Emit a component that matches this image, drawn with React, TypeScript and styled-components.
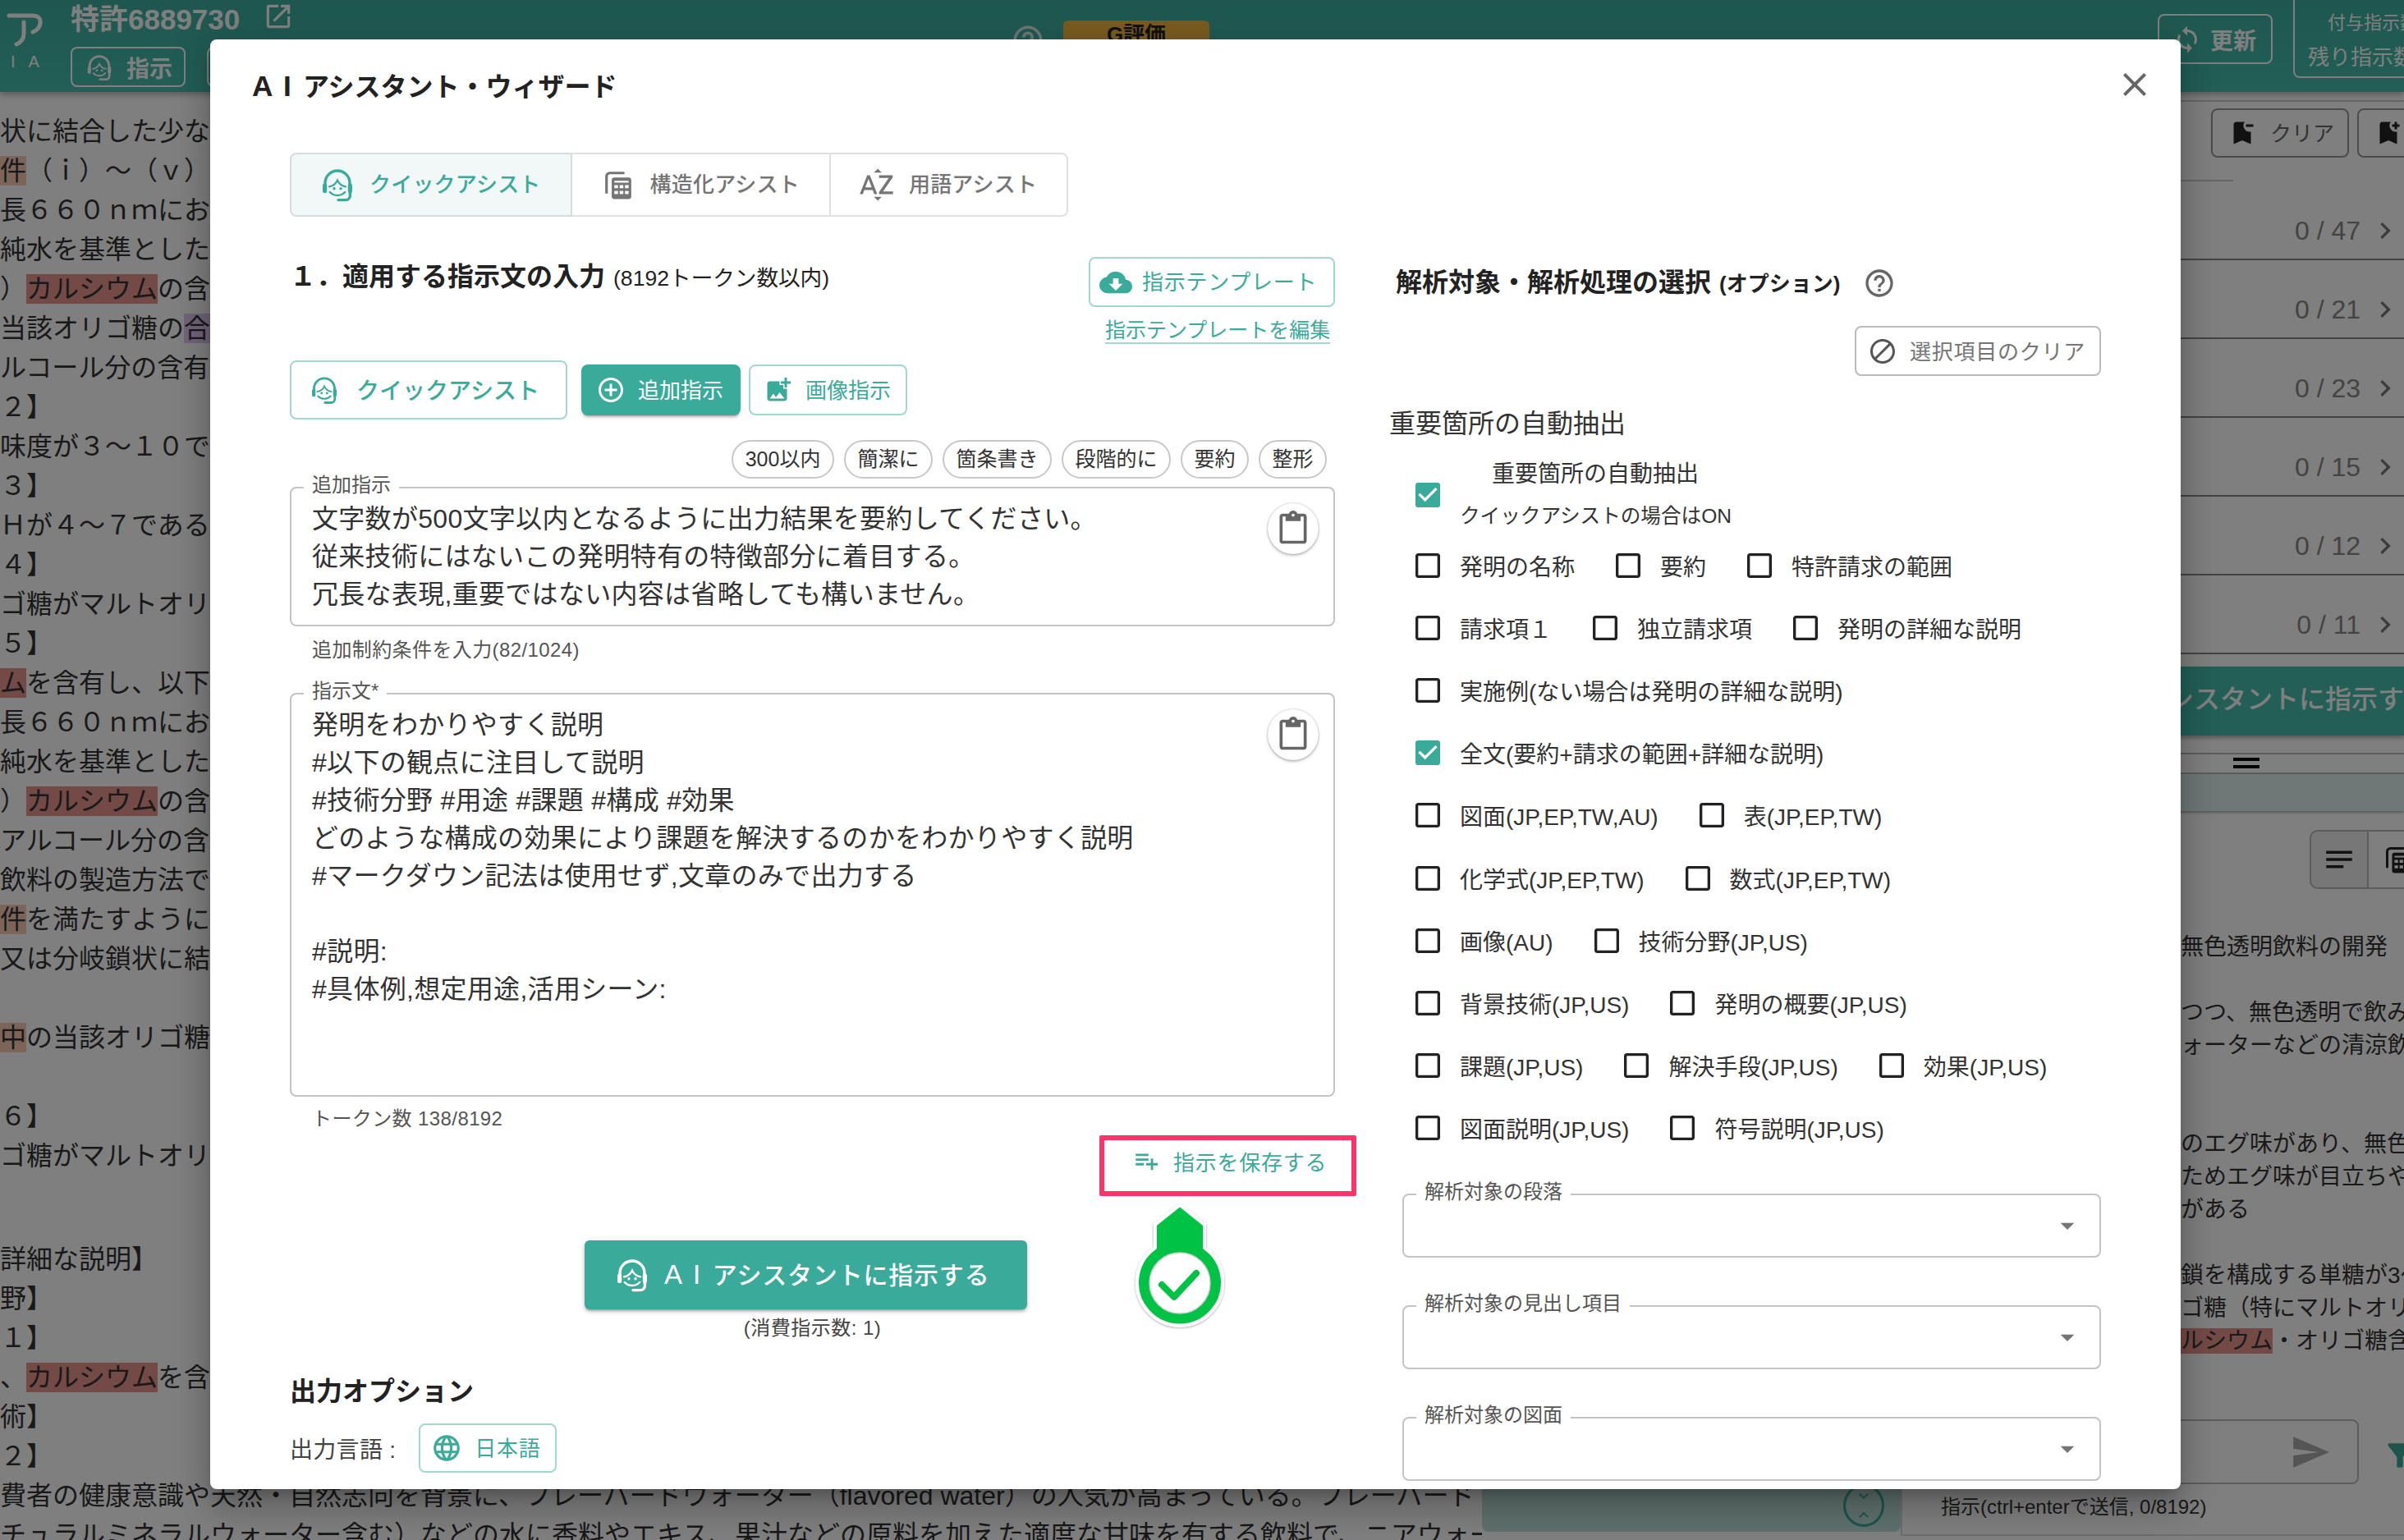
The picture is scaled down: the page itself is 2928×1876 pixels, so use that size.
import React from "react";
import styled, { createGlobalStyle } from "styled-components";
import {
  MdAddCircleOutline,
  MdAddPhotoAlternate,
  MdArrowDropDown,
  MdBlock,
  MdBookmarkAdd,
  MdBookmarkRemove,
  MdCheckBox,
  MdCheckBoxOutlineBlank,
  MdChevronRight,
  MdClose,
  MdCloudDownload,
  MdExpandLess,
  MdExpandMore,
  MdFilterAlt,
  MdHelpOutline,
  MdLanguage,
  MdNotes,
  MdOpenInNew,
  MdOutlineContentPaste,
  MdPlaylistAdd,
  MdSend,
  MdSortByAlpha,
  MdSync,
} from "react-icons/md";

const TEAL = "#3aab9a";
const TEAL_LINE = "#a3d8cf";
const BTN_SPACING = "0.02857em";

const GlobalStyle = createGlobalStyle`
  * { box-sizing: border-box; }
  body {
    margin: 0;
    font-family: "Liberation Sans", "Noto Sans CJK JP", sans-serif;
    color: #333;
    background: #fff;
  }
`;

const AssistIcon = ({ size = 40 }: { size?: number }) => (
  <svg width={size} height={size} viewBox="0 0 24 24" fill="none" stroke="currentColor" strokeWidth="1.5" strokeLinecap="round" style={{ flex: "none" }}>
    <path d="M4.500 12V11a7.500 7.500 0 0 1 15 0v1" strokeWidth="1.700" />
    <path d="M7 13.200c2.200-.3 4-1.800 5-3.800 1 2 2.800 3.500 5 3.800" strokeWidth="1.200" />
    <path d="M7.400 16.500c1.200 1.300 2.800 2 4.600 2 1.800 0 3.400-.7 4.600-2" strokeWidth="1.200" />
    <path d="M4.300 12.500v3.200M19.700 12.500v3.200" strokeWidth="2.600" />
    <path d="M19.700 16v2.600a2.700 2.700 0 0 1-2.700 2.700h-4.500" strokeWidth="1.700" />
    <circle cx="10" cy="14.400" r=".85" fill="currentColor" stroke="none" />
    <circle cx="14" cy="14.400" r=".85" fill="currentColor" stroke="none" />
  </svg>
);

const StackTableIcon = ({ size = 40 }: { size?: number }) => (
  <svg width={size} height={size} viewBox="0 0 24 24" fill="currentColor" style={{ flex: "none" }}>
    <path d="M3 18V5.5A2.5 2.5 0 0 1 5.5 3H16" fill="none" stroke="currentColor" strokeWidth="2" strokeLinecap="round" />
    <path d="M9 6.5h11a2 2 0 0 1 2 2V21a2 2 0 0 1-2 2H9a2 2 0 0 1-2-2V8.500a2 2 0 0 1 2-2z" />
    <g fill="#fff">
      <rect x="9" y="9" width="11" height="1.4" />
      <rect x="9" y="12.300" width="2.800" height="2.400" />
      <rect x="13.100" y="12.300" width="2.800" height="2.400" />
      <rect x="17.200" y="12.300" width="2.800" height="2.400" />
      <rect x="9" y="16.800" width="2.800" height="2.400" />
      <rect x="13.100" y="16.800" width="2.800" height="2.400" />
      <rect x="17.200" y="16.800" width="2.800" height="2.400" />
    </g>
  </svg>
);

const LogoMark = () => (
  <svg width="48" height="44" viewBox="0 0 48 44" fill="none" stroke="currentColor" strokeWidth="5" strokeLinecap="round" strokeLinejoin="round">
    <path d="M3 5 H31 Q42 5 41 14 Q40 22 32 25" />
    <path d="M21 13 V27 Q21 36 12 40" />
  </svg>
);

const GreenMarker = () => (
  <svg width="124" height="156" viewBox="0 0 124 156">
    <defs>
      <filter id="markerShadow" x="-10%" y="-10%" width="120%" height="120%">
        <feDropShadow dx="0" dy="1" stdDeviation="1.5" floodColor="#000" floodOpacity="0.35" />
      </filter>
    </defs>
    <g filter="url(#markerShadow)">
      <path
        d="M62 3 L92 27 V55 A52 52 0 1 1 32 55 V27 Z"
        fill="#00c244"
        stroke="#fff"
        strokeWidth="4"
        strokeLinejoin="round"
      />
    </g>
    <circle cx="62" cy="98" r="37" fill="#fff" stroke="#cfcfcf" strokeWidth="1.5" />
    <path d="M40 100 L55 115 L82 86" fill="none" stroke="#00c244" strokeWidth="8" strokeLinecap="round" strokeLinejoin="round" />
  </svg>
);

const Page = styled.div`
  position: relative;
  width: 2928px;
  height: 1876px;
  overflow: hidden;
`;

const AiMark = styled.span`
  font-size: 1.1em;
  word-spacing: 0.12em;
  white-space: pre;
`;

/* ---------- page behind the dialog ---------- */

const Header = styled.header`
  display: flex;
  height: 112px;
  background: linear-gradient(#3eae9f, #45bfae);
  color: #fff;
  box-shadow: 0 3px 8px rgba(0, 0, 0, 0.3);
`;

const Logo = styled.div`
  display: flex;
  flex-direction: column;
  width: 86px;
  padding: 14px 0 0 8px;
  flex: none;
`;

const LogoSub = styled.span`
  margin: 6px 0 0 5px;
  font-size: 20px;
  line-height: 22px;
  letter-spacing: 16px;
  white-space: nowrap;
`;

const TitleStack = styled.div`
  width: 1145px;
  flex: none;
`;

const DocTitle = styled.div`
  display: flex;
  align-items: center;
  gap: 28px;
  height: 40px;
  font-size: 35px;
  font-weight: 700;
`;

const HeaderTools = styled.div`
  display: flex;
  gap: 26px;
  margin-top: 17px;
`;

const HeaderBtn = styled.div<{ $w: number }>`
  display: flex;
  align-items: center;
  justify-content: center;
  gap: 14px;
  width: ${(p) => p.$w}px;
  height: 49px;
  border: 2px solid #fff;
  border-radius: 8px;
  font-size: 28px;
  font-weight: 700;
`;

const HeaderHelp = styled.div`
  margin-top: 28px;
  width: 64px;
  flex: none;
  opacity: 0.8;
`;

const GradeBadge = styled.div`
  width: 178px;
  height: 60px;
  margin-top: 25px;
  flex: none;
  background: #f4b840;
  border-radius: 6px;
  color: #222;
  font-size: 26px;
  font-weight: 700;
  text-align: center;
  line-height: 34px;
`;

const HeaderRight = styled.div`
  display: flex;
  gap: 25px;
  margin-left: auto;
  width: 300px;
  flex: none;
`;

const RefreshBtn = styled.div`
  display: flex;
  align-items: center;
  gap: 10px;
  width: 140px;
  height: 61px;
  margin-top: 17px;
  padding-left: 16px;
  flex: none;
  border: 2px solid #fff;
  border-radius: 8px;
  font-size: 28px;
  font-weight: 700;
`;

const QuotaBox = styled.div`
  width: 200px;
  height: 95px;
  flex: none;
  padding-left: 16px;
  border: 2px solid #fff;
  border-top: 0;
  border-radius: 0 0 8px 8px;
  white-space: nowrap;
`;

const QuotaTop = styled.div`
  font-size: 22px;
  line-height: 32px;
  margin-top: 12px;
  padding-left: 24px;
`;

const QuotaBottom = styled.div`
  font-size: 26px;
  line-height: 36px;
  margin-top: 8px;
`;

const Body = styled.div`
  display: flex;
  height: 1764px;
`;

const DocColumn = styled.div`
  width: 1805px;
  flex: none;
  padding-top: 24px;
  overflow: hidden;
`;

const DocLine = styled.div<{ $mt?: number }>`
  height: 48px;
  line-height: 48px;
  margin-top: ${(p) => p.$mt ?? 0}px;
  font-size: 32px;
  white-space: nowrap;
`;

const TONES: Record<string, string> = {
  red: "#e8958e",
  brown: "#f8c8b2",
  purple: "#e3c6f7",
};

const Mark = styled.span<{ $tone: string }>`
  background: ${(p) => TONES[p.$tone]};
`;

const MiddleColumn = styled.div`
  display: flex;
  flex-direction: column;
  justify-content: flex-end;
  width: 510px;
  flex: none;
  padding-bottom: 10px;
`;

const ScrollStrip = styled.div`
  display: flex;
  justify-content: flex-end;
  height: 52px;
  padding-right: 20px;
  background: #bfe0da;
  border-radius: 0 0 8px 8px;
`;

const ScrollDial = styled.div`
  display: flex;
  flex-direction: column;
  align-items: center;
  justify-content: center;
  width: 50px;
  height: 52px;
  margin-top: -6px;
  border: 3px solid ${TEAL};
  border-radius: 50%;
  color: ${TEAL};
  line-height: 0;
`;

const SideColumn = styled.div`
  flex: 1;
  min-width: 0;
  padding-top: 10px;
  overflow: hidden;
`;

const SideToolbar = styled.div`
  display: flex;
  gap: 10px;
  height: 97px;
  padding: 8px 0 0 378px;
  border-top: 2px solid #ccc;
`;

const SideBtn = styled.div`
  display: flex;
  align-items: center;
  gap: 16px;
  width: 168px;
  height: 60px;
  flex: none;
  padding: 0 0 3px 18px;
  border: 2px solid #999;
  border-radius: 8px;
  color: #666;
  font-size: 26px;
  svg {
    color: #222;
    margin-top: 3px;
  }
`;

const TabLine = styled.div`
  width: 64px;
  height: 2px;
  margin-left: 341px;
  background: #ccc;
`;

const CountRow = styled.div`
  display: flex;
  align-items: center;
  justify-content: flex-end;
  gap: 10px;
  height: 96px;
  padding: 26px 3px 0 0;
  border-bottom: 2px solid #888;
  color: #888;
  font-size: 32px;
  &:first-of-type {
    height: 91px;
    padding-top: 22px;
  }
  svg {
    color: #777;
  }
`;

const SideAssist = styled.div`
  height: 84px;
  margin-top: 15px;
  padding-left: 235px;
  background: #46bead;
  box-shadow: 0 3px 5px rgba(0, 0, 0, 0.3);
  color: #fff;
  font-size: 32px;
  font-weight: 500;
  line-height: 78px;
  white-space: nowrap;
`;

const DragRow = styled.div`
  display: flex;
  flex-direction: column;
  gap: 5px;
  height: 26px;
  margin-top: 21px;
  padding: 4px 0 0 405px;
  border-top: 2px solid #bbb;
  border-bottom: 2px solid #bbb;
  i {
    display: block;
    width: 32px;
    height: 4px;
    background: #000;
  }
`;

const SoftBand = styled.div`
  height: 45px;
  background: #ddf3ef;
  box-shadow: 0 2px 3px rgba(0, 0, 0, 0.3);
`;

const ViewToggle = styled.div`
  display: flex;
  height: 72px;
  margin: 23px 0 0 498px;
`;

const ViewBtn = styled.div<{ $on?: boolean }>`
  display: flex;
  align-items: center;
  justify-content: center;
  width: 72px;
  flex: none;
  background: ${(p) => (p.$on ? "#eee" : "#fff")};
  border: 2px solid #bbb;
  border-right: ${(p) => (p.$on ? "2px solid #bbb" : "0")};
  border-left: ${(p) => (p.$on ? "2px solid #bbb" : "0")};
  border-radius: ${(p) => (p.$on ? "10px 0 0 10px" : "0")};
  color: #222;
`;

const SideText = styled.div`
  margin-top: 51px;
  padding-left: 341px;
  font-size: 28px;
  line-height: 40px;
  white-space: nowrap;
`;

const SideLine = styled.div`
  height: 40px;
`;

const InputRow = styled.div`
  display: flex;
  align-items: center;
  margin-top: 75px;
  padding-left: 20px;
`;

const InputBox = styled.div`
  display: flex;
  align-items: center;
  justify-content: flex-end;
  width: 538px;
  height: 79px;
  flex: none;
  padding-right: 32px;
  border: 2px solid #bbb;
  border-radius: 8px;
  color: #aaa;
`;

const FilterSlot = styled.div`
  margin: 12px 0 0 28px;
  color: ${TEAL};
`;

const InputHint = styled.div`
  height: 63px;
  padding-left: 47px;
  border-left: 2px solid #ddd;
  border-bottom: 2px solid #ddd;
  font-size: 24px;
  line-height: 56px;
`;

/* ---------- dialog ---------- */

const Backdrop = styled.div`
  position: absolute;
  inset: 0;
  background: rgba(0, 0, 0, 0.5);
`;

const Dialog = styled.div`
  position: absolute;
  top: 48px;
  left: 256px;
  width: 2400px;
  height: 1766px;
  overflow: hidden;
  background: #fff;
  border-radius: 8px;
  box-shadow: 0 11px 15px -7px rgba(0, 0, 0, 0.2), 0 24px 38px 3px rgba(0, 0, 0, 0.14), 0 9px 46px 8px rgba(0, 0, 0, 0.12);
`;

const DialogHead = styled.div`
  display: flex;
  align-items: center;
  justify-content: space-between;
  height: 138px;
  padding: 0 32px 28px 51px;
`;

const DialogTitle = styled.h2`
  margin: 0;
  font-size: 32px;
  font-weight: 600;
  color: #222;
`;

const CloseBtn = styled.div`
  display: flex;
  color: #666;
`;

const Columns = styled.div`
  display: grid;
  grid-template-columns: 1273px 867px;
  gap: 66px;
  padding-left: 97px;
`;

const LeftColumn = styled.div`
  position: relative;
`;

const Tabs = styled.div`
  display: inline-flex;
  height: 78px;
  vertical-align: top;
`;

const Tab = styled.div<{ $on?: boolean }>`
  display: flex;
  align-items: center;
  gap: 19px;
  padding: 0 36px 5px;
  background: ${(p) => (p.$on ? "#f1f8f7" : "#fff")};
  border: 2px solid ${(p) => (p.$on ? "#d5dedc" : "#e0e0e0")};
  border-left-width: ${(p) => (p.$on ? "2px" : "0")};
  color: ${(p) => (p.$on ? TEAL : "#757575")};
  font-size: 26px;
  font-weight: 500;
  letter-spacing: 0.2px;
  &:first-child {
    border-radius: 8px 0 0 8px;
  }
  &:last-child {
    border-radius: 0 8px 8px 0;
  }
`;

const TabIcon = styled.span`
  display: flex;
  align-items: center;
  justify-content: center;
  width: 40px;
  margin-top: 5px;
`;

const SectionRow = styled.div`
  display: flex;
  justify-content: space-between;
  margin-top: 49px;
`;

const SectionTitle = styled.h3`
  margin: 1px 0 0;
  font-size: 32px;
  line-height: 46px;
  font-weight: 600;
  color: #222;
  small {
    margin-left: 10px;
    font-size: 26.6px;
    font-weight: 400;
  }
`;

const TemplateBox = styled.div`
  display: flex;
  flex-direction: column;
  width: 300px;
`;

const TemplateBtn = styled.div`
  display: flex;
  align-items: center;
  gap: 12px;
  height: 61px;
  padding: 0 0 5px 11px;
  border: 2px solid ${TEAL_LINE};
  border-radius: 8px;
  color: ${TEAL};
  font-size: 26px;
  letter-spacing: ${BTN_SPACING};
  white-space: nowrap;
  svg {
    margin-top: 5px;
  }
`;

const TemplateLink = styled.a`
  align-self: flex-start;
  margin: 13px 0 0 20px;
  color: ${TEAL};
  font-size: 25px;
  line-height: 30px;
  border-bottom: 2px solid ${TEAL_LINE};
  white-space: nowrap;
`;

const ActionRow = styled.div`
  display: flex;
  align-items: center;
  gap: 10px;
  margin-top: 20px;
`;

const QuickBtn = styled.div`
  display: flex;
  align-items: center;
  gap: 19px;
  width: 338px;
  height: 72px;
  margin-right: 7px;
  padding: 0 0 3px 20px;
  border: 2px solid ${TEAL_LINE};
  border-radius: 8px;
  color: ${TEAL};
  font-size: 28px;
  font-weight: 500;
  svg {
    margin-top: 3px;
  }
`;

const ModeBtn = styled.div<{ $on?: boolean; $w: number }>`
  display: flex;
  align-items: center;
  gap: 15px;
  width: ${(p) => p.$w}px;
  height: 62px;
  padding: 0 0 3px 16px;
  background: ${(p) => (p.$on ? TEAL : "#fff")};
  border: 2px solid ${(p) => (p.$on ? TEAL : TEAL_LINE)};
  border-radius: 8px;
  box-shadow: ${(p) => (p.$on ? "0 3px 3px -2px rgba(0,0,0,.3), 0 3px 4px rgba(0,0,0,.14)" : "none")};
  color: ${(p) => (p.$on ? "#fff" : TEAL)};
  font-size: 26px;
  svg {
    margin-top: 3px;
  }
`;

const ChipRow = styled.div`
  display: flex;
  justify-content: flex-end;
  gap: 12px;
  margin-top: 25px;
  padding-right: 10px;
`;

const Chip = styled.div`
  height: 47px;
  padding: 0 14.5px;
  border: 2px solid #c8c8c8;
  border-radius: 24px;
  color: #333;
  font-size: 25px;
  line-height: 42px;
  white-space: nowrap;
`;

const OutlinedField = styled.div<{ $minH: number; $mt: number }>`
  position: relative;
  min-height: ${(p) => p.$minH}px;
  margin-top: ${(p) => p.$mt}px;
  padding: 14px 25px;
  border: 2px solid #c4c4c4;
  border-radius: 8px;
`;

const FieldLabel = styled.span`
  position: absolute;
  top: -21px;
  left: 15px;
  padding: 0 10px;
  background: #fff;
  color: #555;
  font-size: 24px;
  line-height: 34px;
`;

const FieldText = styled.div`
  min-height: 46px;
  color: #333;
  font-size: 32px;
  line-height: 46px;
  letter-spacing: 0.00938em;
  white-space: nowrap;
`;

const PasteBtn = styled.div`
  position: absolute;
  top: 18px;
  right: 18px;
  display: flex;
  align-items: center;
  justify-content: center;
  width: 62px;
  height: 62px;
  background: #fff;
  border-radius: 50%;
  box-shadow: 0 2px 4px -1px rgba(0, 0, 0, 0.35), 0 0 2px rgba(0, 0, 0, 0.3);
  color: #666;
`;

const HelperText = styled.div<{ $mt: number }>`
  margin-top: ${(p) => p.$mt}px;
  padding-left: 27px;
  color: #555;
  font-size: 24px;
  line-height: 34px;
  letter-spacing: 0.4px;
`;

const SaveRow = styled.div`
  display: flex;
  justify-content: flex-end;
  margin: 3px -26px 0 0;
`;

const SaveBtn = styled.div`
  display: flex;
  align-items: center;
  gap: 16px;
  width: 313px;
  height: 74px;
  padding: 0 0 12px 34px;
  border: 6px solid #ff3366;
  border-radius: 2px;
  color: ${TEAL};
  font-size: 26px;
  letter-spacing: ${BTN_SPACING};
  white-space: nowrap;
`;

const AssistBtn = styled.div`
  display: flex;
  align-items: center;
  gap: 15px;
  width: 539px;
  height: 84px;
  margin: 54px 0 0 359px;
  padding: 0 0 4px 34px;
  background: ${TEAL};
  border-radius: 6px;
  box-shadow: 0 3px 3px -2px rgba(0, 0, 0, 0.3), 0 3px 4px rgba(0, 0, 0, 0.14), 0 1px 8px rgba(0, 0, 0, 0.12);
  color: #fff;
  font-size: 30px;
  font-weight: 500;
  letter-spacing: 0.8px;
  white-space: nowrap;
  svg {
    margin-top: 4px;
  }
`;

const CostNote = styled.div`
  margin-top: 6px;
  text-align: center;
  color: #444;
  font-size: 24px;
  line-height: 34px;
  letter-spacing: 0.5px;
`;

const MarkerSlot = styled.div`
  position: absolute;
  top: 1279px;
  left: 1022px;
  line-height: 0;
`;

const OptionsTitle = styled.h3`
  margin: 37px 0 0;
  color: #222;
  font-size: 32px;
  line-height: 46px;
  font-weight: 700;
`;

const LangRow = styled.div`
  display: flex;
  align-items: center;
  gap: 28px;
  margin-top: 16px;
  color: #444;
  font-size: 28px;
  letter-spacing: 0.3px;
`;

const LangChip = styled.div`
  display: flex;
  align-items: center;
  gap: 15px;
  width: 168px;
  height: 60px;
  padding: 0 0 4px 13px;
  border: 2px solid ${TEAL_LINE};
  border-radius: 8px;
  color: ${TEAL};
  font-size: 26px;
  letter-spacing: ${BTN_SPACING};
  svg {
    margin-top: 4px;
  }
`;

const RightColumn = styled.div`
  display: flex;
  flex-direction: column;
`;

const RightTitle = styled.div`
  display: flex;
  align-items: center;
  gap: 28px;
  margin-top: 135px;
  padding-left: 8px;
  color: #222;
  font-size: 32px;
  line-height: 46px;
  font-weight: 700;
  small {
    font-size: 26px;
    margin-left: 10px;
  }
  svg {
    color: #666;
  }
`;

const ClearRow = styled.div`
  display: flex;
  justify-content: flex-end;
  margin-top: 28px;
`;

const ClearBtn = styled.div`
  display: flex;
  align-items: center;
  gap: 15px;
  width: 300px;
  height: 61px;
  padding: 0 0 3px 14px;
  border: 2px solid #bbb;
  border-radius: 8px;
  color: #757575;
  font-size: 26px;
  letter-spacing: ${BTN_SPACING};
  white-space: nowrap;
  svg {
    color: #555;
    margin-top: 3px;
  }
`;

const GroupTitle = styled.div`
  margin-top: 35px;
  color: #333;
  font-size: 32px;
  line-height: 46px;
`;

const AutoRow = styled.div`
  display: flex;
  align-items: center;
  gap: 19px;
  height: 96px;
  margin-top: 16px;
  padding-left: 27px;
`;

const AutoText = styled.div`
  display: flex;
  flex-direction: column;
  gap: 11px;
  height: 91px;
  color: #333;
  font-size: 28px;
  line-height: 40px;
`;

const AutoTitle = styled.span`
  padding-left: 39px;
`;

const AutoSub = styled.span`
  font-size: 24.6px;
`;

const CheckRow = styled.div`
  display: flex;
  align-items: center;
  gap: 45px;
  height: 76.1px;
  padding-left: 27px;
`;

const CheckItem = styled.label`
  display: flex;
  align-items: center;
  gap: 19px;
  color: #333;
  font-size: 28px;
  white-space: nowrap;
`;

const CheckMark = styled.span<{ $on?: boolean }>`
  display: flex;
  color: ${(p) => (p.$on ? TEAL : "#222")};
`;

const SelectField = styled.div<{ $mt: number }>`
  position: relative;
  display: flex;
  align-items: center;
  justify-content: flex-end;
  height: 78px;
  margin: ${(p) => p.$mt}px 0 0 16px;
  padding-right: 19px;
  border: 2px solid #c4c4c4;
  border-radius: 8px;
  color: #757575;
`;

const Check = ({ label, on }: { label: string; on?: boolean }) => (
  <CheckItem>
    <CheckMark $on={on}>{on ? <MdCheckBox size={40} /> : <MdCheckBoxOutlineBlank size={40} />}</CheckMark>
    {label}
  </CheckItem>
);

type Seg = string | [string, string];
const docLines: { segs: Seg[]; mt?: number }[] = [
  { segs: ["状に結合した少な"] },
  { segs: [["件", "brown"], "（ｉ）～（ｖ）"] },
  { segs: ["長６６０ｎｍにお"] },
  { segs: ["純水を基準とした"] },
  { segs: ["）", ["カルシウム", "red"], "の含"] },
  { segs: ["当該オリゴ糖の", ["合", "purple"]] },
  { segs: ["ルコール分の含有"] },
  { segs: ["２】"] },
  { segs: ["味度が３～１０で"] },
  { segs: ["３】"] },
  { segs: ["Ｈが４～７である"] },
  { segs: ["４】"] },
  { segs: ["ゴ糖がマルトオリ"] },
  { segs: ["５】"] },
  { segs: [["ム", "red"], "を含有し、以下"] },
  { segs: ["長６６０ｎｍにお"] },
  { segs: ["純水を基準とした"] },
  { segs: ["）", ["カルシウム", "red"], "の含"] },
  { segs: ["アルコール分の含"] },
  { segs: ["飲料の製造方法で"] },
  { segs: [["件", "brown"], "を満たすように"] },
  { segs: ["又は分岐鎖状に結"] },
  { segs: [""] },
  { segs: [["中", "brown"], "の当該オリゴ糖"] },
  { segs: [""] },
  { segs: ["６】"] },
  { segs: ["ゴ糖がマルトオリ"] },
  { segs: ["詳細な説明】"], mt: 78 },
  { segs: ["野】"] },
  { segs: ["１】"] },
  { segs: ["、", ["カルシウム", "red"], "を含"] },
  { segs: ["術】"] },
  { segs: ["２】"] },
  { segs: ["費者の健康意識や天然・自然志向を背景に、フレーバードウォーター（flavored water）の人気が高まっている。フレーバード"] },
  { segs: ["チュラルミネラルウォーター含む）などの水に香料やエキス、果汁などの原料を加えた適度な甘味を有する飲料で、ニアウォー"] },
];

const counts = ["0 / 47", "0 / 21", "0 / 23", "0 / 15", "0 / 12", "0 / 11"];

const sideText = [
  "無色透明飲料の開発",
  "",
  "つつ、無色透明で飲み",
  "ォーターなどの清涼飲",
  "",
  "",
  "のエグ味があり、無色",
  "ためエグ味が目立ちや",
  "がある",
  "",
  "鎖を構成する単糖が3〜",
  "ゴ糖（特にマルトオリ",
];

const chips = ["300以内", "簡潔に", "箇条書き", "段階的に", "要約", "整形"];

const extraLines = [
  "文字数が500文字以内となるように出力結果を要約してください。",
  "従来技術にはないこの発明特有の特徴部分に着目する。",
  "冗長な表現,重要ではない内容は省略しても構いません。",
];

const promptLines = [
  "発明をわかりやすく説明",
  "#以下の観点に注目して説明",
  "#技術分野 #用途 #課題 #構成 #効果",
  "どのような構成の効果により課題を解決するのかをわかりやすく説明",
  "#マークダウン記法は使用せず,文章のみで出力する",
  "",
  "#説明:",
  "#具体例,想定用途,活用シーン:",
];

const checkRows: { label: string; on?: boolean }[][] = [
  [{ label: "発明の名称" }, { label: "要約" }, { label: "特許請求の範囲" }],
  [{ label: "請求項１" }, { label: "独立請求項" }, { label: "発明の詳細な説明" }],
  [{ label: "実施例(ない場合は発明の詳細な説明)" }],
  [{ label: "全文(要約+請求の範囲+詳細な説明)", on: true }],
  [{ label: "図面(JP,EP,TW,AU)" }, { label: "表(JP,EP,TW)" }],
  [{ label: "化学式(JP,EP,TW)" }, { label: "数式(JP,EP,TW)" }],
  [{ label: "画像(AU)" }, { label: "技術分野(JP,US)" }],
  [{ label: "背景技術(JP,US)" }, { label: "発明の概要(JP,US)" }],
  [{ label: "課題(JP,US)" }, { label: "解決手段(JP,US)" }, { label: "効果(JP,US)" }],
  [{ label: "図面説明(JP,US)" }, { label: "符号説明(JP,US)" }],
];

const selects = ["解析対象の段落", "解析対象の見出し項目", "解析対象の図面"];

export default function App() {
  return (
    <Page>
      <GlobalStyle />
      <Header>
        <Logo>
          <LogoMark />
          <LogoSub>IA</LogoSub>
        </Logo>
        <TitleStack>
          <DocTitle>
            特許6889730
            <MdOpenInNew size={38} />
          </DocTitle>
          <HeaderTools>
            <HeaderBtn $w={140}>
              <AssistIcon size={38} />
              指示
            </HeaderBtn>
            <HeaderBtn $w={140} />
          </HeaderTools>
        </TitleStack>
        <HeaderHelp>
          <MdHelpOutline size={42} />
        </HeaderHelp>
        <GradeBadge>G評価</GradeBadge>
        <HeaderRight>
          <RefreshBtn>
            <MdSync size={36} />
            更新
          </RefreshBtn>
          <QuotaBox>
            <QuotaTop>付与指示数</QuotaTop>
            <QuotaBottom>残り指示数</QuotaBottom>
          </QuotaBox>
        </HeaderRight>
      </Header>

      <Body>
        <DocColumn>
          {docLines.map((line, i) => (
            <DocLine key={i} $mt={line.mt}>
              {line.segs.map((seg, j) =>
                typeof seg === "string" ? (
                  <span key={j}>{seg}</span>
                ) : (
                  <Mark key={j} $tone={seg[1]}>
                    {seg[0]}
                  </Mark>
                )
              )}
            </DocLine>
          ))}
        </DocColumn>

        <MiddleColumn>
          <ScrollStrip>
            <ScrollDial>
              <MdExpandMore size={24} />
              <MdExpandLess size={24} />
            </ScrollDial>
          </ScrollStrip>
        </MiddleColumn>

        <SideColumn>
          <SideToolbar>
            <SideBtn>
              <MdBookmarkRemove size={36} />
              クリア
            </SideBtn>
            <SideBtn>
              <MdBookmarkAdd size={36} />
              追加
            </SideBtn>
          </SideToolbar>
          <TabLine />
          {counts.map((c) => (
            <CountRow key={c}>
              {c}
              <MdChevronRight size={40} />
            </CountRow>
          ))}
          <SideAssist>
            <AiMark>A I </AiMark>アシスタントに指示する
          </SideAssist>
          <DragRow>
            <i />
            <i />
          </DragRow>
          <SoftBand />
          <ViewToggle>
            <ViewBtn $on>
              <MdNotes size={42} />
            </ViewBtn>
            <ViewBtn>
              <StackTableIcon size={36} />
            </ViewBtn>
          </ViewToggle>
          <SideText>
            {sideText.map((t, i) => (
              <SideLine key={i}>{t}</SideLine>
            ))}
            <SideLine>
              <Mark $tone="red">ルシウム</Mark>・オリゴ糖含
            </SideLine>
          </SideText>
          <InputRow>
            <InputBox>
              <MdSend size={50} />
            </InputBox>
            <FilterSlot>
              <MdFilterAlt size={44} />
            </FilterSlot>
          </InputRow>
          <InputHint>指示(ctrl+enterで送信, 0/8192)</InputHint>
        </SideColumn>
      </Body>

      <Backdrop />

      <Dialog>
        <DialogHead>
          <DialogTitle>
            <AiMark>A I </AiMark>アシスタント・ウィザード
          </DialogTitle>
          <CloseBtn>
            <MdClose size={48} />
          </CloseBtn>
        </DialogHead>
        <Columns>
          <LeftColumn>
            <Tabs>
              <Tab $on>
                <TabIcon>
                  <AssistIcon size={48} />
                </TabIcon>
                クイックアシスト
              </Tab>
              <Tab>
                <TabIcon>
                  <StackTableIcon size={38} />
                </TabIcon>
                構造化アシスト
              </Tab>
              <Tab>
                <TabIcon>
                  <MdSortByAlpha size={48} style={{ flex: "none" }} />
                </TabIcon>
                用語アシスト
              </Tab>
            </Tabs>

            <SectionRow>
              <SectionTitle>
                １．適用する指示文の入力<small>(8192トークン数以内)</small>
              </SectionTitle>
              <TemplateBox>
                <TemplateBtn>
                  <MdCloudDownload size={40} />
                  指示テンプレート
                </TemplateBtn>
                <TemplateLink>指示テンプレートを編集</TemplateLink>
              </TemplateBox>
            </SectionRow>

            <ActionRow>
              <QuickBtn>
                <AssistIcon size={40} />
                クイックアシスト
              </QuickBtn>
              <ModeBtn $on $w={194}>
                <MdAddCircleOutline size={36} />
                追加指示
              </ModeBtn>
              <ModeBtn $w={193}>
                <MdAddPhotoAlternate size={36} />
                画像指示
              </ModeBtn>
            </ActionRow>

            <ChipRow>
              {chips.map((c) => (
                <Chip key={c}>{c}</Chip>
              ))}
            </ChipRow>

            <OutlinedField $minH={170} $mt={10}>
              <FieldLabel>追加指示</FieldLabel>
              {extraLines.map((t) => (
                <FieldText key={t}>{t}</FieldText>
              ))}
              <PasteBtn>
                <MdOutlineContentPaste size={44} />
              </PasteBtn>
            </OutlinedField>
            <HelperText $mt={12}>追加制約条件を入力(82/1024)</HelperText>

            <OutlinedField $minH={492} $mt={35}>
              <FieldLabel>指示文*</FieldLabel>
              {promptLines.map((t, i) => (
                <FieldText key={i}>{t}</FieldText>
              ))}
              <PasteBtn>
                <MdOutlineContentPaste size={44} />
              </PasteBtn>
            </OutlinedField>
            <HelperText $mt={10}>トークン数 138/8192</HelperText>

            <SaveRow>
              <SaveBtn>
                <MdPlaylistAdd size={34} />
                指示を保存する
              </SaveBtn>
            </SaveRow>

            <AssistBtn>
              <AssistIcon size={48} />
              <span>
                <AiMark>A I </AiMark>アシスタントに指示する
              </span>
            </AssistBtn>
            <CostNote>(消費指示数: 1)</CostNote>
            <MarkerSlot>
              <GreenMarker />
            </MarkerSlot>

            <OptionsTitle>出力オプション</OptionsTitle>
            <LangRow>
              出力言語 :
              <LangChip>
                <MdLanguage size={38} />
                日本語
              </LangChip>
            </LangRow>
          </LeftColumn>

          <RightColumn>
            <RightTitle>
              <span>
                解析対象・解析処理の選択<small>(オプション)</small>
              </span>
              <MdHelpOutline size={40} />
            </RightTitle>
            <ClearRow>
              <ClearBtn>
                <MdBlock size={36} />
                選択項目のクリア
              </ClearBtn>
            </ClearRow>
            <GroupTitle>重要箇所の自動抽出</GroupTitle>
            <AutoRow>
              <CheckMark $on>
                <MdCheckBox size={40} />
              </CheckMark>
              <AutoText>
                <AutoTitle>重要箇所の自動抽出</AutoTitle>
                <AutoSub>クイックアシストの場合はON</AutoSub>
              </AutoText>
            </AutoRow>
            {checkRows.map((row, i) => (
              <CheckRow key={i}>
                {row.map((c) => (
                  <Check key={c.label} label={c.label} on={c.on} />
                ))}
              </CheckRow>
            ))}
            {selects.map((s, i) => (
              <SelectField key={s} $mt={i === 0 ? 42 : 58}>
                <FieldLabel>{s}</FieldLabel>
                <MdArrowDropDown size={40} />
              </SelectField>
            ))}
          </RightColumn>
        </Columns>
      </Dialog>
    </Page>
  );
}
